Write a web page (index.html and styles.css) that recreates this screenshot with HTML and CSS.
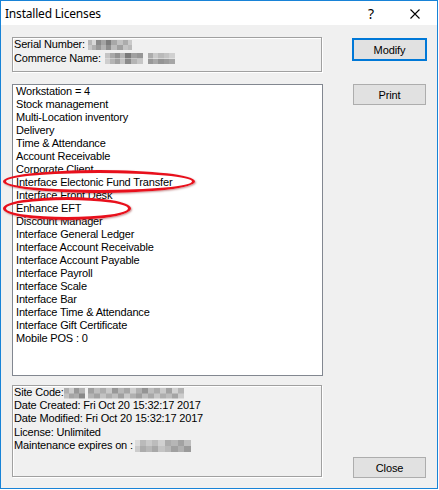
FILE: index.html
```html
<!DOCTYPE html>
<html>
<head>
<meta charset="utf-8">
<link rel="stylesheet" href="styles.css">
</head>
<body>
<div class="window">
  <div class="titlebar">
    <span class="title">Installed Licenses</span>
    <span class="help">?</span>
    <svg class="close-x" width="10" height="10" viewBox="0 0 10 10"><path d="M0.5 0.5 L9.5 9.5 M9.5 0.5 L0.5 9.5" stroke="#000" stroke-width="1.1" fill="none"/></svg>
  </div>
  <div class="content">
    <div class="left">
      <div class="group top-group">
        <div class="line">Serial Number: <span class="blur blur-serial"></span></div>
        <div class="line">Commerce Name:<span class="blur blur-name1"></span><span class="blur blur-name2"></span></div>
      </div>
      <div class="listbox">
        <div>Workstation = 4</div>
        <div>Stock management</div>
        <div>Multi-Location inventory</div>
        <div>Delivery</div>
        <div>Time &amp; Attendance</div>
        <div>Account Receivable</div>
        <div>Corporate Client</div>
        <div>Interface Electonic Fund Transfer</div>
        <div>Interface Front Desk</div>
        <div>Enhance EFT</div>
        <div>Discount Manager</div>
        <div>Interface General Ledger</div>
        <div>Interface Account Receivable</div>
        <div>Interface Account Payable</div>
        <div>Interface Payroll</div>
        <div>Interface Scale</div>
        <div>Interface Bar</div>
        <div>Interface Time &amp; Attendance</div>
        <div>Interface Gift Certificate</div>
        <div>Mobile POS : 0</div>
      </div>
      <div class="group bottom-group">
        <div class="line">Site Code:<span class="blur blur-site1"></span><span class="blur blur-site2"></span></div>
        <div class="line">Date Created: Fri Oct 20 15:32:17 2017</div>
        <div class="line">Date Modified: Fri Oct 20 15:32:17 2017</div>
        <div class="line">License: Unlimited</div>
        <div class="line">Maintenance expires on : <span class="blur blur-maint"></span></div>
      </div>
    </div>
    <div class="right">
      <button class="btn default">Modify</button>
      <button class="btn print">Print</button>
      <button class="btn close">Close</button>
    </div>
  </div>
  <div class="mark mark-1"></div>
  <div class="mark mark-2"></div>
</div>
</body>
</html>
```
FILE: styles.css
```css
html, body {
  margin: 0;
  padding: 0;
  background: #ffffff;
}

.window {
  position: relative;
  width: 438px;
  height: 489px;
  box-sizing: border-box;
  border: 1px solid #1883d7;
  display: flex;
  flex-direction: column;
  font-family: "Liberation Sans", Arial, sans-serif;
  font-size: 11px;
  letter-spacing: -0.17px;
  color: #000;
}

.titlebar {
  height: 24px;
  flex: none;
  background: #ffffff;
  display: flex;
  align-items: center;
  position: relative;
}

.title {
  font-family: "Noto Sans", "Open Sans", sans-serif;
  font-size: 12px;
  letter-spacing: -0.2px;
  margin-left: 4px;
  margin-top: 1px;
}

.help {
  font-family: "Noto Sans", sans-serif;
  font-size: 14px;
  letter-spacing: 0;
  margin-left: auto;
  margin-top: 1px;
}

.close-x {
  margin-left: 36px;
  margin-right: 17px;
  margin-top: 1px;
}

.content {
  flex: 1;
  background: #f0f0f0;
  display: flex;
  gap: 29px;
  padding-left: 11px;
}

.left {
  width: 311px;
  display: flex;
  flex-direction: column;
  padding-top: 12px;
}

.group {
  width: 310px;
  box-sizing: border-box;
  border: 1px solid #a0a0a0;
  box-shadow: inset 1px 1px 0 #ffffff, 1px 1px 0 #ffffff;
  padding-left: 1px;
}

.top-group {
  height: 35px;
}

.top-group .line {
  line-height: 13.6px;
  height: 13.6px;
  white-space: nowrap;
}

.bottom-group {
  height: 92px;
  margin-top: 9px;
}

.bottom-group .line {
  line-height: 13.2px;
  height: 13.2px;
  white-space: nowrap;
}

.listbox {
  margin-top: 12px;
  height: 292px;
  box-sizing: border-box;
  border: 1px solid #828790;
  background: #ffffff;
  padding-left: 3px;
  line-height: 13px;
}

.listbox div {
  height: 13px;
  white-space: nowrap;
}

.right {
  width: 75px;
  display: flex;
  flex-direction: column;
  padding-top: 13px;
  padding-bottom: 9px;
}

.btn {
  font-family: "Liberation Sans", Arial, sans-serif;
  font-size: 11px;
  letter-spacing: -0.1px;
  color: #000;
  background: #e1e1e1;
  border: 1px solid #adadad;
  width: 73px;
  height: 21px;
  margin: 1px;
  padding: 0;
  box-sizing: border-box;
}

.btn.default {
  width: 75px;
  height: 23px;
  margin: 0;
  border: 2px solid #0078d7;
}

.btn.print {
  margin-top: 23px;
}

.btn.close {
  margin-top: auto;
}

.blur {
  display: inline-block;
  vertical-align: middle;
}

.blur-serial {
  width: 44px;
  height: 10px;
  background:
    linear-gradient(90deg, #b8b8b8 0 4px, #d8d8d8 4px 8px, #8a8a8a 8px 13px, #a4a4a4 13px 18px, #7c7c7c 18px 23px, #a8a8a8 23px 29px, #c2c2c2 29px 35px, #acacac 35px 40px, #cacaca 40px 44px) top / 100% 50% no-repeat,
    linear-gradient(90deg, #c8c8c8 0 4px, #b0b0b0 4px 8px, #989898 8px 13px, #b4b4b4 13px 18px, #8e8e8e 18px 23px, #bcbcbc 23px 29px, #a0a0a0 29px 35px, #c4c4c4 35px 40px, #bababa 40px 44px) bottom / 100% 50% no-repeat;
}

.blur-name1 {
  width: 38px;
  height: 11px;
  margin-left: 4px;
  background:
    linear-gradient(90deg, #c4c4c4 0 5px, #a8a8a8 5px 10px, #929292 10px 15px, #b4b4b4 15px 20px, #7a7a7a 20px 26px, #a0a0a0 26px 32px, #969696 32px 38px) top / 100% 50% no-repeat,
    linear-gradient(90deg, #cecece 0 5px, #b4b4b4 5px 10px, #a0a0a0 10px 15px, #c2c2c2 15px 20px, #8a8a8a 20px 26px, #b4b4b4 26px 32px, #c6c6c6 32px 38px) bottom / 100% 50% no-repeat;
}

.blur-name2 {
  width: 27px;
  height: 11px;
  margin-left: 5px;
  background:
    linear-gradient(90deg, #acacac 0 5px, #cacaca 5px 10px, #bababa 10px 16px, #c4c4c4 16px 21px, #d0d0d0 21px 27px) top / 100% 50% no-repeat,
    linear-gradient(90deg, #989898 0 5px, #a8a8a8 5px 10px, #949494 10px 16px, #9c9c9c 16px 21px, #a6a6a6 21px 27px) bottom / 100% 50% no-repeat;
}

.blur-site1 {
  width: 21px;
  height: 11px;
  background:
    linear-gradient(90deg, #b0b0b0 0 5px, #cccccc 5px 10px, #989898 10px 15px, #b4b4b4 15px 21px) top / 100% 50% no-repeat,
    linear-gradient(90deg, #c2c2c2 0 5px, #a4a4a4 5px 10px, #acacac 10px 15px, #888888 15px 21px) bottom / 100% 50% no-repeat;
}

.blur-site2 {
  width: 96px;
  height: 11px;
  margin-left: 3px;
  background:
    linear-gradient(90deg, #a0a0a0 0 6px, #bebebe 6px 12px, #adadad 12px 18px, #c8c8c8 18px 24px, #989898 24px 30px, #b8b8b8 30px 36px, #a6a6a6 36px 42px, #cecece 42px 48px, #b0b0b0 48px 54px, #949494 54px 60px, #bdbdbd 60px 66px, #ababab 66px 72px, #cacaca 72px 78px, #a2a2a2 78px 84px, #d2d2d2 84px 90px, #b4b4b4 90px 96px) top / 100% 50% no-repeat,
    linear-gradient(90deg, #b4b4b4 0 6px, #a2a2a2 6px 12px, #c2c2c2 12px 18px, #acacac 18px 24px, #bebebe 24px 30px, #a0a0a0 30px 36px, #c8c8c8 36px 42px, #b0b0b0 42px 48px, #9e9e9e 48px 54px, #bebebe 54px 60px, #a8a8a8 60px 66px, #c6c6c6 66px 72px, #aeaeae 72px 78px, #bcbcbc 78px 84px, #a4a4a4 84px 90px, #cccccc 90px 96px) bottom / 100% 50% no-repeat;
}

.blur-maint {
  width: 56px;
  height: 12px;
  margin-left: -1px;
  background:
    linear-gradient(90deg, #dcdcdc 0 5px, #bababa 5px 11px, #cacaca 11px 17px, #bcbcbc 17px 23px, #d0d0d0 23px 30px, #acacac 30px 36px, #b6b6b6 36px 43px, #a2a2a2 43px 49px, #bebebe 49px 56px) top / 100% 50% no-repeat,
    linear-gradient(90deg, #cccccc 0 5px, #acacac 5px 11px, #b8b8b8 11px 17px, #a8a8a8 17px 23px, #c4c4c4 23px 30px, #b8b8b8 30px 36px, #a0a0a0 36px 43px, #b0b0b0 43px 49px, #9a9a9a 49px 56px) bottom / 100% 50% no-repeat;
}

.mark {
  position: absolute;
  box-sizing: border-box;
  border: 3px solid #e8101c;
  border-radius: 50%;
  box-shadow: 1px 1px 2px rgba(120, 0, 0, 0.4);
  pointer-events: none;
}

.mark-1 {
  left: 2px;
  top: 169px;
  width: 192px;
  height: 23px;
}

.mark-2 {
  left: 2px;
  top: 196px;
  width: 128px;
  height: 23px;
}
```
